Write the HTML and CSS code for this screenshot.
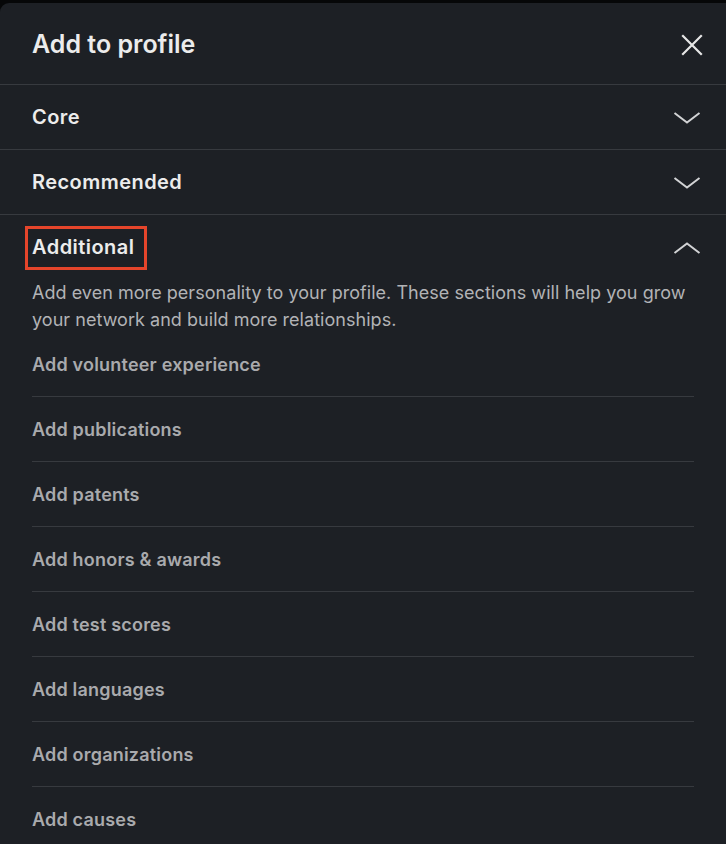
FILE: index.html
```html
<!DOCTYPE html>
<html lang="en">
<head>
<meta charset="utf-8">
<title>Add to profile</title>
<link rel="stylesheet" href="styles.css">
</head>
<body>
<div class="modal">
  <header class="modal-header">
    <h1 class="modal-title">Add to profile</h1>
    <button class="close-btn" aria-label="Close">
      <svg width="22" height="22" viewBox="0 0 22 22"><path d="M2 2 L20 20 M20 2 L2 20" stroke="#e6e6e6" stroke-width="2.2" fill="none" stroke-linecap="square"/></svg>
    </button>
  </header>

  <section class="section">
    <div class="section-head">
      <h2 class="section-title">Core</h2>
      <svg class="chev" width="28" height="14" viewBox="0 0 28 14"><path d="M1.5 2 L14 11.5 L26.5 2" stroke="#d2d3d5" stroke-width="2" fill="none"/></svg>
    </div>
  </section>

  <section class="section">
    <div class="section-head">
      <h2 class="section-title">Recommended</h2>
      <svg class="chev" width="28" height="14" viewBox="0 0 28 14"><path d="M1.5 2 L14 11.5 L26.5 2" stroke="#d2d3d5" stroke-width="2" fill="none"/></svg>
    </div>
  </section>

  <section class="section open">
    <div class="section-head">
      <h2 class="section-title"><span class="highlight">Additional</span></h2>
      <svg class="chev" width="28" height="14" viewBox="0 0 28 14"><path d="M1.5 12 L14 2.5 L26.5 12" stroke="#d2d3d5" stroke-width="2" fill="none"/></svg>
    </div>
    <p class="section-desc">Add even more personality to your profile. These sections will help you grow your network and build more relationships.</p>
    <ul class="items">
      <li class="item">Add volunteer experience</li>
      <li class="item">Add publications</li>
      <li class="item">Add patents</li>
      <li class="item">Add honors &amp; awards</li>
      <li class="item">Add test scores</li>
      <li class="item">Add languages</li>
      <li class="item">Add organizations</li>
      <li class="item">Add causes</li>
    </ul>
  </section>
</div>
</body>
</html>
```

FILE: styles.css
```css
html, body {
  margin: 0;
  padding: 0;
  background: #060708;
  height: 100%;
  overflow: hidden;
}
body {
  font-family: Inter, "Liberation Sans", Arial, sans-serif;
  -webkit-font-smoothing: antialiased;
}
.modal {
  margin-top: 3px;
  background: #1d2025;
  border-top-left-radius: 9px;
  min-height: 900px;
}
.modal-header {
  height: 82px;
  box-sizing: border-box;
  padding: 0 22px 0 32px;
  display: flex;
  align-items: center;
  justify-content: space-between;
  border-bottom: 1px solid #373a3f;
}
.modal-title {
  margin: 0;
  font-size: 25px;
  font-weight: 600;
  color: #ececec;
  letter-spacing: 0;
}
.close-btn {
  background: none;
  border: 0;
  padding: 0;
  width: 22px;
  height: 22px;
  margin-right: 1px;
  margin-top: 2px;
  cursor: pointer;
  display: flex;
}
.section {
  border-bottom: 1px solid #373a3f;
}
.section.open {
  border-bottom: 0;
}
.section-head {
  height: 64px;
  display: flex;
  align-items: center;
  justify-content: space-between;
  padding: 0 25px 0 32px;
}
.section-title {
  margin: 0;
  font-size: 20px;
  font-weight: 600;
  color: #ececec;
  letter-spacing: 0.45px;
}
.chev {
  display: block;
  margin-top: 2px;
}
.highlight {
  position: relative;
  display: inline-block;
}
.highlight::after {
  content: "";
  position: absolute;
  left: -7px;
  right: -13px;
  top: -9px;
  bottom: -11px;
  border: 3px solid #e5452b;
}
.section-desc {
  margin: 0;
  padding: 0 32px;
  font-size: 18px;
  line-height: 27px;
  color: #b2b3b6;
  letter-spacing: 0.04px;
  height: 53px;
}
.items {
  list-style: none;
  margin: 0;
  padding: 0 32px;
}
.item {
  height: 64px;
  display: flex;
  align-items: center;
  border-bottom: 1px solid #373a3f;
  font-size: 18px;
  font-weight: 600;
  color: #a9aaad;
  letter-spacing: 0.2px;
}
.item:last-child {
  border-bottom: 0;
}
```
